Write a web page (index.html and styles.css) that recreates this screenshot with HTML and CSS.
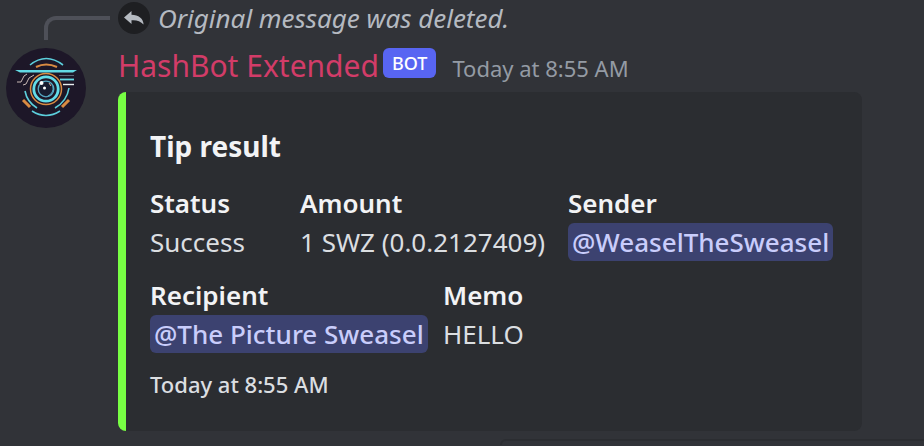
FILE: index.html
```
<!DOCTYPE html>
<html lang="en">
<head>
    <meta charset="UTF-8">
    <title>HashBot Extended</title>
    <link rel="stylesheet" href="styles.css">
</head>
<body>

    <div class="reply">
        <div class="reply-spine"></div>
        <div class="reply-badge">
            <svg width="22" height="18" viewBox="0 -1 22 18">
                <path d="M8.5 1 L1 7.5 L8.5 14 V10.2 C13.5 9.8 17.5 11 20.6 14.6 C20.4 8.6 15.5 5 8.5 4.8 Z" fill="#b5bac1"/>
            </svg>
        </div>
        <div class="reply-text">Original message was deleted.</div>
    </div>

    <div class="message">
        <svg class="avatar" viewBox="0 0 80 80" fill="none">
            <circle cx="40" cy="40" r="40" fill="#1d1728"/>
            <g stroke="#5ccfdc" stroke-width="1.6">
                <path d="M24 17 Q40 4 57 17"/>
                <path d="M26 63 Q40 72 54 63"/>
                <path d="M19 43 Q21 54 31 60"/>
                <path d="M63 40 Q61 53 49 60"/>
            </g>
            <g stroke="#d98b42" stroke-width="2">
                <path d="M30 19 Q40 14 51 19"/>
                <path d="M17 52 L24 59" stroke-width="3"/>
                <path d="M63 52 L56 59" stroke-width="3"/>
                <circle cx="40" cy="41" r="15.5" stroke-width="1.5"/>
            </g>
            <path d="M9 22 H71 L67 24.5 H14 Z" fill="#62d9e4"/>
            <path d="M53 27.5 H68" stroke="#586574"/>
            <path d="M54 31.5 H68" stroke="#62d9e4" stroke-width="1.8"/>
            <path d="M57 36.5 H68" stroke="#e8eef0" stroke-width="1.4"/>
            <path d="M11 34 H15 L18 28 L21 26 M17 37 L20 36 L23 30 L28 27" stroke="#c9b9b4"/>
            <circle cx="40" cy="41" r="12.2" stroke="#62dce8" stroke-width="2.8"/>
            <circle cx="40" cy="41" r="7.8" fill="#181d30" stroke="#55a9c3" stroke-width="1.3"/>
            <path d="M42 48 Q48 45 47 38" stroke="#55a9c3"/>
            <path d="M43 35 L45 38" stroke="#e0ae9c"/>
            <circle cx="35.5" cy="35" r="2" fill="#fff"/>
            <circle cx="38.5" cy="40" r="1.5" fill="#fff"/>
        </svg>

        <div class="content">
            <div class="header">
                <span class="username">HashBot Extended</span>
                <span class="bot-tag">BOT</span>
                <time class="timestamp">Today at 8:55 AM</time>
            </div>

            <div class="embed">
                <div class="embed-title">Tip result</div>

                <dl class="fields">
                    <div class="field">
                        <dt>Status</dt>
                        <dd>Success</dd>
                    </div>
                    <div class="field">
                        <dt>Amount</dt>
                        <dd>1 SWZ (0.0.2127409)</dd>
                    </div>
                    <div class="field">
                        <dt>Sender</dt>
                        <dd><span class="mention">@WeaselTheSweasel</span></dd>
                    </div>
                </dl>

                <dl class="fields fields-two">
                    <div class="field">
                        <dt>Recipient</dt>
                        <dd><span class="mention">@The Picture Sweasel</span></dd>
                    </div>
                    <div class="field">
                        <dt>Memo</dt>
                        <dd>HELLO</dd>
                    </div>
                </dl>

                <time class="embed-footer">Today at 8:55 AM</time>
            </div>
        </div>
    </div>

    <!-- top edge of the hover toolbar of the next message -->
    <div class="toolbar"></div>

</body>
</html>
```

FILE: styles.css
```
body {
    margin: 0;
    background-color: #313338;
    color: #dbdee1;
    font-family: "Noto Sans", "Open Sans", sans-serif;
    font-size: 26px;
    overflow-x: hidden;
}

.reply {
    display: flex;
    height: 40px;
}

.reply-spine {
    box-sizing: border-box;
    width: 66px;
    height: 24px;
    margin: 16px 8px 0 44px;
    border-left: 4px solid #4e5058;
    border-top: 4px solid #4e5058;
    border-top-left-radius: 12px;
}

.reply-badge {
    display: flex;
    align-items: center;
    justify-content: center;
    width: 32px;
    height: 32px;
    margin: 2px 8px 0 0;
    border-radius: 50%;
    background-color: #1e1f22;
}

.reply-text {
    color: #b5bac1;
    font-style: italic;
    line-height: 36px;
    white-space: nowrap;
}

.message {
    display: flex;
    margin-right: 62px;
}

.avatar {
    flex: none;
    width: 80px;
    height: 80px;
    margin: 8px 32px 0 6px;
}

.content {
    flex: 1;
    min-width: 0;
    padding-top: 8px;
}

.header {
    display: flex;
    align-items: baseline;
    height: 44px;
    line-height: 36px;
    white-space: nowrap;
}

.username {
    color: #d23c68;
    font-size: 30px;
}

.bot-tag {
    align-self: flex-start;
    margin: 0 16px 0 4px;
    padding: 0 9px;
    border-radius: 6px;
    background-color: #5865f2;
    color: #fff;
    font-size: 18px;
    font-weight: 500;
    line-height: 30px;
}

.timestamp {
    color: #949ba4;
    font-size: 22px;
}

.embed {
    padding: 32px;
    padding-left: 24px;
    border-left: 8px solid #78ff44;
    border-radius: 8px;
    background-color: #2b2d31;
}

.embed-title {
    color: #f2f3f5;
    font-size: 28px;
    font-weight: 700;
    line-height: 45px;
}

.fields {
    display: grid;
    grid-template-columns: 150fr 268fr 262fr;
    margin: 16px 0 0;
    white-space: nowrap;
}

.fields-two {
    grid-template-columns: 293fr 387fr;
}

.field {
    min-width: 0;
}

.field dt {
    color: #f2f3f5;
    font-weight: 600;
    line-height: 36px;
}

.field dd {
    margin: 2px 0 0;
    line-height: 38px;
}

.mention {
    display: inline-block;
    padding: 0 4px;
    border-radius: 6px;
    background-color: #3c4270;
    color: #c9cdfb;
    font-weight: 500;
}

.embed-footer {
    display: block;
    margin-top: 16px;
    font-size: 22px;
    font-weight: 500;
    line-height: 30px;
}

.toolbar {
    height: 4px;
    margin: 8px -8px 0 500px;
    border: 2px solid #2b2d31;
    border-bottom: 0;
    border-radius: 8px 8px 0 0;
}
```
